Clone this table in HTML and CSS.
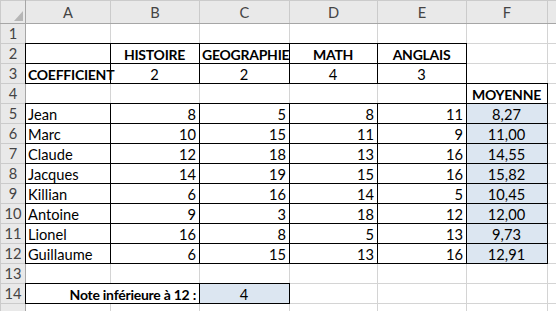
FILE: index.html
```html
<!DOCTYPE html>
<html lang="fr">
<head>
<meta charset="utf-8">
<title>Notes</title>
<link rel="stylesheet" href="styles.css">
</head>
<body>
<table class="sheet">
  <colgroup>
    <col class="w-hd"><col class="w-a"><col class="w-b"><col class="w-c"><col class="w-d"><col class="w-e"><col class="w-f"><col class="w-g">
  </colgroup>
  <tr class="r-head">
    <th class="corner"><svg class="tri" width="25" height="22" viewBox="0 0 25 22"><polygon points="22,10 22,20 13,20" fill="#b6b6b6"/></svg></th>
    <th class="col">A</th><th class="col">B</th><th class="col">C</th><th class="col">D</th><th class="col">E</th><th class="col">F</th><th class="col"></th>
  </tr>
  <tr><th class="row">1</th><td></td><td></td><td></td><td></td><td></td><td></td><td></td></tr>
  <tr><th class="row">2</th><td class="bx"></td><td class="bx b c">HISTOIRE</td><td class="bx b c">GEOGRAPHIE</td><td class="bx b c">MATH</td><td class="bx b c">ANGLAIS</td><td></td><td></td></tr>
  <tr><th class="row">3</th><td class="bx b">COEFFICIENT</td><td class="bx c">2</td><td class="bx c">2</td><td class="bx c">4</td><td class="bx c">3</td><td></td><td></td></tr>
  <tr><th class="row">4</th><td></td><td></td><td></td><td></td><td></td><td class="bx b c">MOYENNE</td><td></td></tr>
  <tr><th class="row">5</th><td class="bx">Jean</td><td class="bx n">8</td><td class="bx n">5</td><td class="bx n">8</td><td class="bx n">11</td><td class="bx c fill">8,27</td><td></td></tr>
  <tr><th class="row">6</th><td class="bx">Marc</td><td class="bx n">10</td><td class="bx n">15</td><td class="bx n">11</td><td class="bx n">9</td><td class="bx c fill">11,00</td><td></td></tr>
  <tr><th class="row">7</th><td class="bx">Claude</td><td class="bx n">12</td><td class="bx n">18</td><td class="bx n">13</td><td class="bx n">16</td><td class="bx c fill">14,55</td><td></td></tr>
  <tr><th class="row">8</th><td class="bx">Jacques</td><td class="bx n">14</td><td class="bx n">19</td><td class="bx n">15</td><td class="bx n">16</td><td class="bx c fill">15,82</td><td></td></tr>
  <tr><th class="row">9</th><td class="bx">Killian</td><td class="bx n">6</td><td class="bx n">16</td><td class="bx n">14</td><td class="bx n">5</td><td class="bx c fill">10,45</td><td></td></tr>
  <tr><th class="row">10</th><td class="bx">Antoine</td><td class="bx n">9</td><td class="bx n">3</td><td class="bx n">18</td><td class="bx n">12</td><td class="bx c fill">12,00</td><td></td></tr>
  <tr><th class="row">11</th><td class="bx">Lionel</td><td class="bx n">16</td><td class="bx n">8</td><td class="bx n">5</td><td class="bx n">13</td><td class="bx c fill">9,73</td><td></td></tr>
  <tr><th class="row">12</th><td class="bx">Guillaume</td><td class="bx n">6</td><td class="bx n">15</td><td class="bx n">13</td><td class="bx n">16</td><td class="bx c fill">12,91</td><td></td></tr>
  <tr><th class="row">13</th><td></td><td></td><td></td><td></td><td></td><td></td><td></td></tr>
  <tr><th class="row">14</th><td class="bx b n" colspan="2">Note inférieure à 12 :</td><td class="bx c fill">4</td><td></td><td></td><td></td><td></td></tr>
  <tr><th class="row"></th><td></td><td></td><td></td><td></td><td></td><td></td><td></td></tr>
</table>
</body>
</html>
```

FILE: styles.css
```css
html, body {
  margin: 0;
  padding: 0;
  background: #fff;
  overflow: hidden;
}

.sheet {
  border-collapse: collapse;
  table-layout: fixed;
  width: 627px;
  font-family: Lato, "Liberation Sans", sans-serif;
  font-size: 14.67px;
  color: #000;
}

.w-hd { width: 25px; }
.w-a { width: 85px; }
.w-b { width: 89px; }
.w-c { width: 90px; }
.w-d { width: 88px; }
.w-e { width: 89px; }
.w-f { width: 81px; }
.w-g { width: 80px; }

.sheet tr { height: 20px; }
.sheet tr.r-head { height: 23px; }

.sheet td {
  border: 1px solid #d4d4d4;
  padding: 0 3px 0 2px;
  line-height: 17px;
  vertical-align: bottom;
  white-space: nowrap;
}

/* column and row headers */
.sheet th {
  background: #e9e9e9;
  color: #444;
  font-weight: normal;
  padding: 0;
  border: 1px solid #cbcbcb;
  white-space: nowrap;
  overflow: hidden;
}

.sheet th.col {
  border-bottom-color: #a6a6a6;
  text-align: center;
  vertical-align: bottom;
  line-height: 20px;
}

.sheet th.row {
  border-right-color: #a6a6a6;
  text-align: center;
  vertical-align: bottom;
  line-height: 18px;
}

.sheet th.corner {
  border-bottom-color: #a6a6a6;
  border-right-color: #a6a6a6;
  vertical-align: top;
}

.tri { display: block; }

/* cell formats */
.sheet td.bx { border: 1px double #000; }
.b {
  font-weight: bold;
  font-size: 14px;
  letter-spacing: -0.25px;
}
.c { text-align: center; }
.n { text-align: right; }
.fill { background: #dce6f1; }
```
